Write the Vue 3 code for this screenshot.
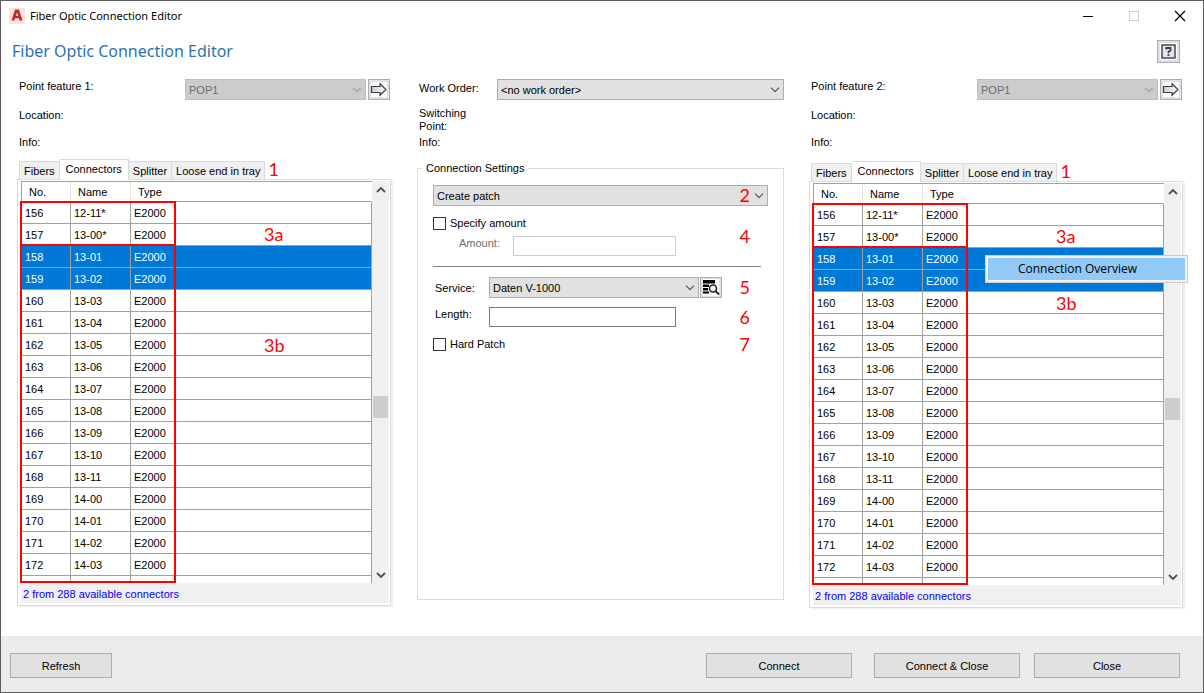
<script setup>
import { ref } from 'vue'

const names = ['12-11*', '13-00*', '13-01', '13-02', '13-03', '13-04', '13-05', '13-06', '13-07', '13-08', '13-09', '13-10', '13-11', '14-00', '14-01', '14-02', '14-03']
const rows = names.map((name, i) => ({ no: 156 + i, name, type: 'E2000', selected: i === 2 || i === 3 }))
const tabs = ['Fibers', 'Connectors', 'Splitter', 'Loose end in tray']
const sides = [
  { id: 1, menu: false },
  { id: 2, menu: true }
]
const specify = ref(false)
const hard = ref(false)
</script>

<template>
  <div class="window">
    <header class="titlebar">
      <svg class="logo" width="16" height="16" viewBox="0 0 16 16" aria-hidden="true">
        <rect width="16" height="16" fill="#f9e3e0" />
        <path d="M2.500 12.500 6 1.500h4l3.500 11h-3l-.7-2.200H6.100l-.7 2.200z M6.800 8h2.500L8.100 4.500z" fill="#c22a30" fill-rule="evenodd" />
      </svg>
      <span class="caption">Fiber Optic Connection Editor</span>
      <div class="controls">
        <button aria-label="Minimize"><svg width="12" height="12"><path d="M1 6.500h10" stroke="#000" /></svg></button>
        <button aria-label="Maximize" disabled><svg width="12" height="12"><rect x="1.500" y="1.500" width="9" height="9" fill="none" stroke="#ccc" /></svg></button>
        <button aria-label="Close window"><svg width="12" height="12"><path d="M1 1l10 10M11 1 1 11" stroke="#000" stroke-width="1.200" /></svg></button>
      </div>
    </header>

    <div class="heading">
      <h1>Fiber Optic Connection Editor</h1>
      <button class="tool help" aria-label="Help">
        <svg width="17" height="17" viewBox="0 0 17 17">
          <rect width="17" height="17" fill="#fff" />
          <rect x="2" y="2" width="13" height="13" fill="#e4e7f0" stroke="#3b3f49" stroke-width="1.400" />
          <path d="M6.300 6.500V5h4.200v2.500L8.500 8.800v1.400M8.500 11.200v1.800" fill="none" stroke="#3b3f49" stroke-width="1.800" />
        </svg>
      </button>
    </div>

    <main class="columns">
      <section v-for="s in sides" :key="s.id" class="side" :class="'side-' + s.id">
        <div class="point">
          <label :for="'point' + s.id">Point feature {{ s.id }}:</label>
          <span class="drop">
            <select :id="'point' + s.id" disabled><option>POP1</option></select>
            <svg class="chev" width="10" height="6"><path d="M1 .7l4 4 4-4" /></svg>
          </span>
          <button class="tool" aria-label="Go to point feature">
            <svg width="18" height="17" viewBox="0 0 18 17">
              <defs>
                <linearGradient :id="'arrow' + s.id"><stop stop-color="#c3cad8" /><stop offset="1" stop-color="#fff" /></linearGradient>
              </defs>
              <rect x="1" width="16" height="15" y="1" fill="#fff" />
              <path d="M1.500 5.500h8.500V2.700l6 5.800-6 5.800v-2.800H1.500z" :fill="`url(#arrow${s.id})`" stroke="#3b3f49" stroke-width="1.200" />
            </svg>
          </button>
        </div>
        <p class="loc">Location:</p>
        <p class="info">Info:</p>

        <div class="tabs" role="tablist">
          <button v-for="t in tabs" :key="t" role="tab" :class="{ active: t === 'Connectors' }">{{ t }}</button>
          <span class="mark">1</span>
        </div>
        <div class="panel">
          <div class="gridwrap">
            <div class="clip">
              <table>
                <colgroup><col class="c1"><col class="c2"><col class="c3"><col></colgroup>
                <thead>
                  <tr><th>No.</th><th>Name</th><th>Type</th><th></th></tr>
                </thead>
                <tbody>
                  <tr v-for="r in rows" :key="r.no" :class="{ sel: r.selected }">
                    <td>{{ r.no }}</td><td>{{ r.name }}</td><td>{{ r.type }}</td><td></td>
                  </tr>
                  <tr><td></td><td></td><td></td><td></td></tr>
                </tbody>
              </table>
            </div>
            <div class="scroll">
              <svg width="10" height="6"><path d="M1 5l4-4 4 4" /></svg>
              <span class="thumb"></span>
              <svg width="10" height="6"><path d="M1 1l4 4 4-4" /></svg>
            </div>
            <span class="box box-a"></span>
            <span class="box box-b"></span>
            <span class="mark mark-a">3a</span>
            <span class="mark mark-b">3b</span>
            <button v-if="s.menu" class="menu" role="menuitem">Connection Overview</button>
          </div>
          <p class="status">2 from 288 available connectors</p>
        </div>
      </section>

      <section class="center">
        <div class="order">
          <label for="order">Work Order:</label>
          <span class="drop">
            <select id="order"><option>&lt;no work order&gt;</option></select>
            <svg class="chev" width="10" height="6"><path d="M1 .7l4 4 4-4" /></svg>
          </span>
        </div>
        <p class="switching">Switching Point:</p>
        <p class="cinfo">Info:</p>

        <fieldset>
          <legend>Connection Settings</legend>
          <span class="drop patch">
            <select aria-label="Patch action"><option>Create patch</option></select>
            <span class="mark">2</span>
            <svg class="chev" width="10" height="6"><path d="M1 .7l4 4 4-4" /></svg>
          </span>
          <div class="amounts">
            <div>
              <label class="check"><input v-model="specify" type="checkbox">Specify amount</label>
              <div class="field amount">
                <label for="amount">Amount:</label><input id="amount" type="text" disabled>
              </div>
            </div>
            <span class="mark">4</span>
          </div>
          <hr>
          <div class="field service">
            <label for="service">Service:</label>
            <span class="drop">
              <select id="service"><option>Daten V-1000</option></select>
              <svg class="chev" width="10" height="6"><path d="M1 .7l4 4 4-4" /></svg>
            </span>
            <button class="tool" aria-label="Search service">
              <svg width="18" height="17" viewBox="0 0 18 17">
                <rect x="1" width="16" height="17" fill="#fff" />
                <path d="M1 1h12v3.500H1zM1 5.500h6v2.500H1zM1 9h5v2.500H1zM1 12.500h6v2H1z" fill="#000" />
                <circle cx="11" cy="9.500" r="3.500" fill="#fff" stroke="#222" stroke-width="1.600" />
                <path d="M13.500 12l3.500 3.500" stroke="#222" stroke-width="2" />
              </svg>
            </button>
            <span class="mark">5</span>
          </div>
          <div class="field length">
            <label for="length">Length:</label><input id="length" type="text">
            <span class="mark">6</span>
          </div>
          <div class="field hard">
            <label class="check"><input v-model="hard" type="checkbox">Hard Patch</label>
            <span class="mark">7</span>
          </div>
        </fieldset>
      </section>
    </main>

    <footer>
      <button class="refresh">Refresh</button>
      <span class="spacer"></span>
      <button class="connect">Connect</button>
      <button>Connect &amp; Close</button>
      <button>Close</button>
    </footer>
  </div>
</template>

<style>
body { background: #fff; }
</style>

<style scoped>
* { box-sizing: border-box; }
.window {
  min-height: 100vh;
  display: flex;
  flex-direction: column;
  border: 1px solid #5c5c5e;
  background: #fff;
  color: #000;
  font: 11px/14px "Liberation Sans", Arial, sans-serif;
}
p, h1 { margin: 0; font-weight: 400; }
button, select, input { font: inherit; color: inherit; }
.titlebar { display: flex; align-items: center; height: 29px; padding-left: 8px; }
.caption { flex: 1; margin-left: 5px; font: 11px/16px "Noto Sans", sans-serif; }
.controls { display: flex; }
.controls button { width: 46px; height: 28px; padding: 0; border: 0; background: none; display: grid; place-items: center; }
.heading { display: flex; justify-content: space-between; align-items: center; height: 42px; padding: 0 23px 0 11px; }
h1 { font: 16px/22px "Noto Sans", sans-serif; color: #2a73b2; }
.tool { padding: 0; border: 1px solid #adadad; background: #e1e1e1; display: grid; place-items: center; width: 22px; height: 21px; }
.help { width: 23px; height: 23px; }
.columns {
  flex: 1;
  display: grid;
  grid-template-columns: 375fr 367fr 375fr;
  gap: 25px;
  padding: 7px 19px 28px 16px;
}
.side { display: flex; flex-direction: column; min-width: 0; }
.side-1 { order: 1; }
.center { order: 2; min-width: 0; }
.side-2 { order: 3; }
.point { display: grid; grid-template-columns: 1fr 181px 22px; gap: 2px; padding: 0 2px; height: 21px; }
.drop { position: relative; display: flex; }
select {
  appearance: none;
  width: 100%;
  height: 21px;
  padding: 0 20px 0 3px;
  border: 1px solid #adadad;
  border-radius: 0;
  background: #e1e1e1;
}
select:disabled { background: #ccc; border-color: #bfbfbf; color: #6d6d6d; opacity: 1; }
.chev { position: absolute; right: 4px; top: 8px; fill: none; stroke: #555; stroke-width: 1.200; }
select:disabled + .chev { stroke: #a0a0a0; }
.loc { margin: 8px 2px 0; }
.info { margin: 13px 2px 0; }
.tabs { display: flex; align-items: flex-end; padding-left: 2px; height: 30px; }
.side-2 .tabs { height: 32px; }
.tabs button { height: 18px; padding: 0 4px; border: 1px solid #d9d9d9; border-width: 1px 1px 0 0; background: #f0f0f0; white-space: nowrap; }
.tabs button:first-child { border-left-width: 1px; }
.tabs .active { height: 21px; padding: 0 6px 2px; background: #fff; margin-bottom: -1px; z-index: 1; }
.mark { font: 18px/20px Lato, "Open Sans", sans-serif; color: #f00; }
.tabs .mark { margin-left: 3px; }
.panel { border: 1px solid #dcdcdc; padding: 1px 1px 2px 3px; box-shadow: 2px 1px 0 #f0f0f0; margin-right: 1px; }
.gridwrap { position: relative; display: flex; height: 402px; background: #f0f0f0; }
.clip { flex: 1; min-width: 0; overflow: hidden; }
table { width: 100%; border-collapse: separate; border-spacing: 0; table-layout: fixed; background: #fff; border-left: 1px solid #a0a0a0; border-top: 1px solid #a0a0a0; }
.c1 { width: 49px; }
.c2 { width: 60px; }
.c3 { width: 45px; }
th { height: 20px; padding: 0 7px; text-align: left; font-weight: 400; border-bottom: 1px solid #a0a0a0; border-right: 1px solid #e2e2e2; }
th:nth-child(n+3) { border-right: 0; }
th:last-child { border-right: 1px solid #fff; }
td { height: 22px; padding: 1px 4px 0 3px; border: solid #a0a0a0; border-width: 0 1px 1px 0; }
td:nth-child(3) { border-right: 0; }
.sel td { background: #0078d7; color: #fff; }
.scroll { width: 17px; padding: 6px 1px 5px; display: flex; flex-direction: column; align-items: center; }
.scroll svg { fill: none; stroke: #505050; stroke-width: 1.800; }
.thumb { width: 15px; height: 22px; background: #cdcdcd; margin: 203px 0 auto; }
.box { position: absolute; left: -1px; width: 156px; border: 2px solid #f00; }
.box-a { top: 20px; height: 45px; }
.box-b { top: 63px; height: 339px; }
.mark-a, .mark-b { position: absolute; left: 243px; }
.mark-a { top: 43px; }
.mark-b { top: 154px; }
.side-2 .mark-b { top: 110px; }
.menu {
  position: absolute;
  left: 172px;
  top: 72px;
  width: 203px;
  height: 28px;
  padding: 0 18px 0 0;
  border: 1px solid #ccc;
  background: #91c9f7;
  box-shadow: inset 0 0 0 2px #f2f2f2;
  font: 12px/16px "Open Sans", sans-serif;
}
.status { height: 20px; padding: 4px 2px; color: #00f; background: #f0f0f0; }
.center { display: flex; flex-direction: column; }
.order { display: grid; grid-template-columns: 79px 1fr; padding-left: 1px; }
.order label { padding: 2px 1px; }
.switching { width: 60px; margin: 7px 0 0 2px; line-height: 13px; }
.cinfo { margin: 2px 0 0 2px; }
fieldset { flex: 1; min-width: 0; margin: 12px 0 8px; border: 1px solid #dcdcdc; padding: 10px 15px 0; }
legend { padding: 0 4px; margin-left: -11px; }
.patch .mark { position: absolute; right: 18px; top: 0; }
.amounts { display: flex; align-items: center; justify-content: space-between; padding: 10px 18px 10px 0; }
.check { display: flex; align-items: center; gap: 4px; }
.check input { appearance: none; width: 13px; height: 13px; margin: 0; border: 1px solid #333; background: #fff; }
.field { display: flex; align-items: flex-start; }
.amount { margin-top: 6px; color: #6d6d6d; }
.amount label { width: 80px; padding-left: 26px; }
input[type="text"] { height: 20px; padding: 0 3px; border: 1px solid #7a7a7a; background: #fff; }
.amount input[type="text"] { width: 163px; border-color: #ccc; }
hr { margin: 0 7px 10px 0; border: 0; border-top: 1px solid #828282; }
.service, .length { padding-left: 2px; }
.service > label, .length > label { width: 54px; padding-top: 4px; }
.service .drop { width: 210px; }
.service .tool { margin-left: 1px; }
.length { margin-top: 9px; }
.length > label { padding-top: 0; }
.length input { width: 187px; }
.hard { margin-top: 7px; align-items: center; }
.field .mark { margin-left: auto; margin-right: 18px; }
footer { display: flex; align-items: flex-start; height: 56px; padding: 17px 23px 0 9px; background: #ebebeb; gap: 14px; }
footer button { width: 146px; height: 25px; padding: 0; border: 1px solid #adadad; background: #e1e1e1; }
footer .refresh { width: 102px; }
footer .connect { margin-right: 8px; }
.spacer { flex: 1; }
</style>
